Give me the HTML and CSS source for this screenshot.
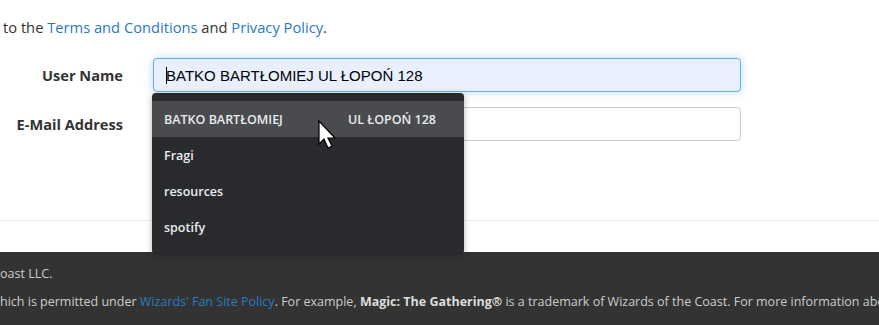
FILE: index.html
```html
<!DOCTYPE html>
<html lang="en">
<head>
    <meta charset="UTF-8">
    <meta name="viewport" content="width=device-width, initial-scale=1.0">
    <title>Register</title>
    <link rel="stylesheet" href="styles.css">
</head>
<body>
    <div class="page">
        <p class="terms">to the <a href="#">Terms and Conditions</a> and <a href="#">Privacy Policy</a>.</p>

        <form class="register-form">
            <div class="form-row">
                <label class="form-label" for="username">User Name</label>
                <div class="field">
                    <input class="form-input autofilled" id="username" type="text" value="BATKO BARTŁOMIEJ UL ŁOPOŃ 128">
                    <span class="caret"></span>

                    <!-- autofill suggestions -->
                    <div class="suggestions">
                        <div class="suggestion active">
                            <span>BATKO BARTŁOMIEJ</span>
                            <span>UL ŁOPOŃ 128</span>
                        </div>
                        <div class="suggestion"><span>Fragi</span></div>
                        <div class="suggestion"><span>resources</span></div>
                        <div class="suggestion"><span>spotify</span></div>
                    </div>

                    <svg class="pointer" width="20" height="30" viewBox="0 0 20 30">
                        <path d="M1 1 L1 24 L6 19 L10 28 L14 26 L10 18 L17 18 Z" fill="#fff" stroke="#000" stroke-width="1.2" stroke-linejoin="miter"/>
                    </svg>
                </div>
            </div>
            <div class="form-row">
                <label class="form-label" for="email">E-Mail Address</label>
                <div class="field">
                    <input class="form-input" id="email" type="email">
                </div>
            </div>
        </form>

        <hr class="divider">
    </div>

    <footer class="site-footer">
        <p>oast LLC.</p>
        <p>hich is permitted under <a href="#">Wizards' Fan Site Policy</a>. For example, <strong>Magic: The Gathering®</strong> is a trademark of Wizards of the Coast. For more information about</p>
    </footer>
</body>
</html>
```

FILE: styles.css
```css
body {
    margin: 0;
    font-family: 'Open Sans', sans-serif;
    font-size: 15px;
    color: #333;
    background-color: #fff;
    overflow: hidden;
}

a {
    color: #2a7ac0;
    text-decoration: none;
}

.page {
    padding: 0 3px;
}

.terms {
    margin: 0;
    padding-top: 17px;
    line-height: 20px;
    font-size: 14.7px;
}

.register-form {
    margin-top: 21px;
    display: flex;
    flex-direction: column;
    gap: 15px;
}

.form-row {
    display: flex;
    align-items: center;
}

.form-label {
    width: 120px;
    text-align: right;
    font-weight: 700;
    font-size: 14.6px;
    padding-right: 30px;
}

.field {
    position: relative;
    width: 588px;
}

.form-input {
    box-sizing: border-box;
    width: 100%;
    height: 34px;
    padding: 6px 12px;
    border: 1px solid #ccc;
    border-radius: 4px;
    font-family: 'Liberation Sans', Arial, sans-serif;
    font-size: 15px;
    color: #000;
    background-color: #fff;
    outline: none;
}

.form-input.autofilled {
    background-color: #e8f0fe;
    border-color: #66afe9;
    box-shadow: 0 0 8px rgba(102, 175, 233, 0.45);
}

.caret {
    position: absolute;
    left: 13px;
    top: 9px;
    width: 1px;
    height: 17px;
    background-color: #000;
}

.suggestions {
    position: absolute;
    left: -1px;
    top: 35px;
    width: 312px;
    padding: 8px 0 9px;
    background-color: #292a2d;
    border-radius: 4px;
    box-shadow: 0 2px 6px rgba(0, 0, 0, 0.3);
    z-index: 5;
}

.suggestion {
    display: flex;
    justify-content: space-between;
    align-items: center;
    height: 36px;
    padding: 0 28px 0 12px;
    font-size: 12.5px;
    font-weight: 600;
    color: #e8eaed;
}

.suggestion.active {
    background-color: #4a4b4f;
}

.pointer {
    position: absolute;
    left: 165px;
    top: 62px;
    z-index: 6;
}

.divider {
    margin: 79px -3px 0;
    border: 0;
    border-top: 1px solid #eee;
}

.site-footer {
    margin-top: 31px;
    background-color: #333;
    color: #ccc;
    padding: 13px 0 20px;
    font-size: 12.5px;
    white-space: nowrap;
    overflow: hidden;
}

.site-footer p {
    margin: 0 0 10px;
    line-height: 18px;
}

.site-footer strong {
    color: #ddd;
}
```
